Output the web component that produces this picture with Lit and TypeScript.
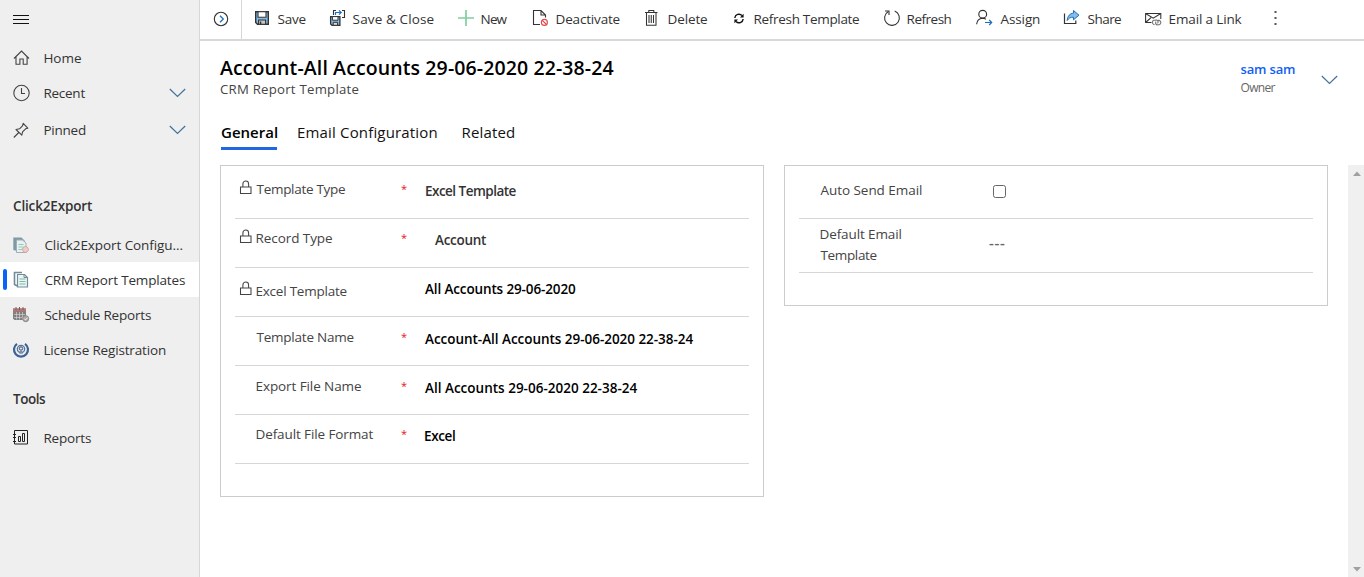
import { LitElement, html, svg, css } from "lit";
import { customElement, property } from "lit/decorators.js";
import { classMap } from "lit/directives/class-map.js";

const FAMILY = '"Open Sans", "Noto Sans", sans-serif';
const pen = document.createElement("canvas").getContext("2d")!;

/** A single line of text tracked so that its ink fills the given measure. */
@customElement("fit-text")
class FitText extends LitElement {
  @property() text = "";
  @property({ type: Number }) w = 0;
  @property({ type: Number }) size = 13.5;
  @property({ type: Number }) weight = 400;
  static styles = css`
    :host { display: block; flex: none; white-space: pre; }
    span { display: block; font-family: "Open Sans", "Noto Sans", sans-serif; }
  `;
  render() {
    pen.font = `${this.weight} ${this.size}px ${FAMILY}`;
    const m = pen.measureText(this.text);
    const ink = m.actualBoundingBoxLeft + m.actualBoundingBoxRight;
    const track = (this.w - ink) / Math.max(1, this.text.length - 1);
    return html`<span style="width:${this.w}px;font-size:${this.size}px;font-weight:${this.weight};letter-spacing:${track.toFixed(3)}px;text-indent:${m.actualBoundingBoxLeft.toFixed(2)}px">${this.text}</span>`;
  }
}

const t = (text: string, w: number, size = 13.5, weight = 400) =>
  html`<fit-text .text=${text} .w=${w} .size=${size} .weight=${weight}></fit-text>`;

const D = "#333";
const B = "#1c6fbe";

const command: Record<string, unknown> = {
  save: svg`<path d="M2.7 2.7h12.6v12.6H4.5l-1.8-1.8z" fill="#83bde8" stroke=${D} stroke-width="1.4"/><path d="M5 2.7h8v5.6H5z" fill="#fff" stroke=${D} stroke-width="1.1"/><path d="M5.6 11h7v4.3h-7z" fill="#c8c8c8" stroke=${D} stroke-width="1.1"/><path d="M7.6 12.5v2.5" stroke=${D} stroke-width="1.4"/>`,
  saveClose: svg`<path d="M2.6 7.6h9.3v8.7H4l-1.4-1.4z" fill="#83bde8" stroke=${D} stroke-width="1.3"/><path d="M4.4 7.6h5.6v3.6H4.4z" fill="#fff" stroke=${D}/><path d="M5.2 13.3h4.4v3H5.2z" fill="#ddd" stroke=${D}/><path d="M5.5 6V1.5H8M14 1.5h2.5V8.5H14" fill="none" stroke=${D} stroke-width="1.1"/><path d="M7.5 6V3.500H13M11 1.300l2.200 2.200L11 5.700" fill="none" stroke=${B} stroke-width="1.2"/>`,
  add: svg`<path d="M1 9h16M9 1v16" stroke="#82cda0" stroke-width="1.7"/>`,
  deactivate: svg`<path d="M8 15.500H1.500v-14H9l4.500 4.500V8.500M9 1.500V6h4.500" fill="none" stroke=${D} stroke-width="1.1"/><circle cx="12.400" cy="13.400" r="3" fill="#fff" stroke="#e0484c" stroke-width="1.1"/><path d="M10.300 11.300l4.200 4.200" stroke="#e0484c" stroke-width="1.1"/>`,
  remove: svg`<path d="M1 3.500h12.500M4.800 3.500v-2h5v2M2.500 3.500v12.700h9.500V3.500M5 6v8M7.250 6v8M9.500 6v8" fill="none" stroke=${D} stroke-width="1.050"/>`,
  sync: svg`<path d="M4.800 9A4.200 4.200 0 0 1 12 6.500M13.200 10A4.200 4.200 0 0 1 6 12.500" fill="none" stroke="#111" stroke-width="1.400"/><path d="M13.600 4.800v3.700H10zM4.400 14.200v-3.700h3.600z" fill="#111"/>`,
  refresh: svg`<path d="M11.700 2.100A7.400 7.400 0 1 1 5.400 2.500" fill="none" stroke=${D} stroke-width="1.100"/><path d="M2 2h4v4" fill="none" stroke=${D} stroke-width="1.100"/>`,
  assign: svg`<circle cx="6.700" cy="5.200" r="3.900" fill="none" stroke=${D} stroke-width="1.150"/><path d="M.6 15.200C1 11.500 3.500 9.300 6.600 9.200q2 0 3.300 1" fill="none" stroke=${D} stroke-width="1.150"/><path d="M9 13.500h6.500M13.200 11l2.500 2.500-2.500 2.500" fill="none" stroke=${B} stroke-width="1.200"/>`,
  share: svg`<path d="M1.500 4.500v10h11.300v-3" fill="none" stroke=${D} stroke-width="1.200"/><path d="M10.500 1.500l5.500 4.700-5.500 4.600V8.300C7.500 8 5.600 9.200 4.200 11.500 4.500 7 7 4.300 10.500 4.200z" fill="#83bde8" stroke=${B} stroke-width="1"/>`,
  mail: svg`<path d="M6.500 13.500H.6V4.500h15.200V10M.6 4.500l7.600 4.600 7.600-4.600M.6 13.500L6 8.600" fill="none" stroke=${D} stroke-width="1.050"/><path d="M9.500 15.600l-1-.4a2.200 2.200 0 0 1 .4-4l2.800-.2a2 2 0 0 1 .8 3.400M12.800 11.200l1.300.2a2.200 2.200 0 0 1 0 4.300l-2.200.2a2 2 0 0 1-.8-3.200" fill="none" stroke="#777" stroke-width="1.150"/>`,
};

const nav: Record<string, unknown> = {
  home: svg`<path d="M1 9.500L8.500 2 16 9.500M3 8v7.300h3.900V10h3.300v5.300h3.900V8" fill="none" stroke="#444" stroke-width="1.100"/>`,
  clock: svg`<circle cx="8.500" cy="9" r="7.700" fill="none" stroke="#444" stroke-width="1.100"/><path d="M8.500 4v5.500H12" fill="none" stroke="#444" stroke-width="1.100"/>`,
  pin: svg`<path d="M.8 16.500l5-5M3 8.500l5.800 5.700.8-3.400 3-3 2.200-.6L10.200 2.300 9.500 4.800l-3 3z" fill="none" stroke="#444" stroke-width="1.100" stroke-linejoin="round"/>`,
  config: svg`<path d="M.3 1.500h8.200L12 5v3l-4 8-7.700-2z" fill="#8199a5"/><path d="M3.500 4h6l3.500 3v9.500H3.500z" fill="#e8f1ef" stroke="#9db0b8"/><path d="M5.500 8.500h5M5.500 11h5M5.500 13.500h4" stroke="#8fcbbd" stroke-width="1.200"/><circle cx="12.500" cy="13.500" r="2.900" fill="#e7cfcc" stroke="#d88f88" stroke-dasharray="1.500 .7"/>`,
  report: svg`<path d="M1.500 14V1.500h7.500M1.500 13.500l3 1.500" stroke="#728c9b" stroke-width="1.600" fill="none"/><path d="M4.500 3.500h7l3 3v9.500h-10z" fill="#edf5f3" stroke="#728c9b" stroke-width="1.200"/><path d="M11 3.500v3h3.500" fill="none" stroke="#728c9b"/><path d="M6.500 8h6M6.500 10.500h6M6.500 13h6" stroke="#78bba9" stroke-width="1.200"/>`,
  schedule: svg`<path d="M0 2.500h13V14H1.500L0 12.500z" fill="#808080"/><path d="M0 2.500h13v2.800H0z" fill="#c07070"/><path d="M3 1v3M6.500 1v3M10 1v3" stroke="#666"/><path d="M1 8.500h11M1 11.500h11M3.500 6v7.500M6.500 6v7.500M9.500 6v7.500" stroke="#d0d0d0" stroke-width=".7"/><circle cx="12.700" cy="12.700" r="3" fill="#b8a9a4" stroke="#898989"/><path d="M11.300 12.700l1.200 1.200 2-2.300" fill="none" stroke="#eee"/>`,
  license: svg`<path d="M4 2.800A7 7 0 1 0 12 2.800" fill="none" stroke="#3d6294" stroke-width="2.200"/><circle cx="8" cy="8" r="3.700" fill="#dfe4ec" stroke="#51739d" stroke-width="1.200"/><circle cx="8" cy="7.500" r="1.700" fill="none" stroke="#3c4c75"/><path d="M6.500 10v3.500L8 12.300l1.500 1.200V10" fill="#7b8db0"/>`,
  reports: svg`<path d="M1.500 1.500h13v13.500h-13zM0 5.500h3M0 8.500h3M0 12.500h3M5.500 7.500h2v5h-2zM9.500 4.500h2v8h-2z" fill="none" stroke="#222" stroke-width="1"/>`,
};

const commands: [string, string, number][] = [
  ["save", "Save", 28], ["saveClose", "Save & Close", 81], ["add", "New", 26],
  ["deactivate", "Deactivate", 63], ["remove", "Delete", 38.5], ["sync", "Refresh Template", 104.5],
  ["refresh", "Refresh", 44], ["assign", "Assign", 39.5], ["share", "Share", 33.5], ["mail", "Email a Link", 72],
];

const chevron = html`<svg class="chev" width="17" height="10"><path d="M.8 1l7.700 7.500L16.200 1" fill="none" stroke="#41729a" stroke-width="1.200"/></svg>`;
const lock = html`<svg class="lock" width="12" height="16"><path d="M.5 7h10.500v6.500H.5zM2.900 7V3.900a2.850 2.850 0 0 1 5.700 0V7" fill="none" stroke="#444" stroke-width="1.050"/></svg>`;

type Row = { cls: string; locked?: boolean; req?: boolean; label: string; lw: number; value: string; vw: number; soft?: boolean };
const rows: Row[] = [
  { cls: "r1", locked: true, req: true, label: "Template Type", lw: 88.5, value: "Excel Template", vw: 90.5, soft: true },
  { cls: "r2", locked: true, req: true, label: "Record Type", lw: 75.5, value: "Account", vw: 51, soft: true },
  { cls: "r3", locked: true, label: "Excel Template", lw: 90, value: "All Accounts 29-06-2020", vw: 151 },
  { cls: "r4", req: true, label: "Template Name", lw: 97, value: "Account-All Accounts 29-06-2020 22-38-24", vw: 268.5 },
  { cls: "r4", req: true, label: "Export File Name", lw: 104.5, value: "All Accounts 29-06-2020 22-38-24", vw: 212.5 },
  { cls: "r2", req: true, label: "Default File Format", lw: 117, value: "Excel", vw: 30 },
];

@customElement("app-root")
class AppRoot extends LitElement {
  static styles = css`
    :host { display: flex; width: 100vw; height: 100vh; background: #fff; overflow: hidden; font-family: "Open Sans", "Noto Sans", sans-serif; color: #333; line-height: 20px; }
    * { box-sizing: border-box; }
    svg { display: block; flex: none; overflow: visible; }
    aside { width: 200px; flex: none; background: #efefef; border-right: 1px solid #d6d6d6; }
    .burger { margin: 14px 0 0 13px; height: 26px; }
    .item { display: flex; align-items: center; height: 35px; padding-left: 13px; }
    .item svg.ic { margin-right: 14px; }
    .item fit-text { margin-left: .4px; }
    .item.recent { height: 36px; }
    .item.pinned { height: 37px; }
    .item .chev { margin-left: auto; margin-right: 13.5px; }
    .item.on { background: #fff; padding-left: 3px; }
    .item.on::before { content: ""; width: 4px; height: 21px; border-radius: 2px; background: #0b62f7; margin-right: 6px; }
    .group { padding-left: 13px; height: 20px; }
    .g1 { margin: 48px 0 11px; }
    .g2 { margin: 22px 0 11px; }
    main { flex: 1; min-width: 0; display: flex; flex-direction: column; }
    .bar { display: flex; height: 41px; border-bottom: 2px solid #d8d8d8; flex: none; }
    .go { width: 42px; height: 39px; border-right: 1px solid #d6d6d6; padding: 11px 0 0 13px; margin-right: 11px; }
    .cmds { display: grid; grid-template-columns: 75px 129px 75px 112px 86px 153px 93px 87px 82px 128px 4px; padding-top: 9px; }
    .cmd { display: flex; height: 20px; }
    .cmd fit-text { margin-left: .6px; }
    .head { display: flex; justify-content: space-between; padding: 17px 26px 0 20px; height: 81px; flex: none; }
    .title { color: #000; }
    .sub { color: #444; padding-top: 1px; }
    .owner { display: flex; gap: 26px; padding-top: 1px; }
    .name { color: #1160f5; height: 19px; }
    .own { color: #666; line-height: 18px; padding-top: 1px; }
    .owner .chev { margin-top: 16px; }
    .tabs { display: flex; gap: 21px; padding-left: 21px; height: 43px; color: #111; flex: none; }
    .tab { height: 28px; }
    .tab.two { margin-right: 5px; }
    .tab.on { border-bottom: 3px solid #2266e3; color: #000; }
    .body { flex: 1; display: flex; min-height: 0; align-items: flex-start; padding-left: 20px; }
    .panel { width: 544px; border: 1px solid #ccc; padding: 0 14px; margin-right: 20px; flex: none; }
    .p1 { height: 332px; }
    .p2 { height: 141px; }
    .row { display: grid; grid-template-columns: 5px 16.5px 144.5px 24px 1fr; height: 49px; border-bottom: 1px solid #d6d6d6; color: #444; }
    .row > * { grid-row: 1; }
    .row .lock { grid-column: 2; margin-top: 1px; }
    .row .label { grid-column: 3; }
    .row .star { grid-column: 4; color: #e81123; }
    .row .value { grid-column: 5; color: #000; padding-top: 2px; }
    .row .value.soft { color: #333; padding-left: 1px; }
    .r1 { height: 53px; padding-top: 13px; }
    .r2 { padding-top: 9px; }
    .row.r2 .value.soft { padding-left: 10px; }
    .r3 { padding-top: 13px; }
    .row.r3 .lock { margin-top: 0; }
    .row.r3 .value { padding-top: 0; margin-top: -2px; }
    .r4 { padding-top: 10px; }
    .erow { display: grid; grid-template-columns: 21.5px 168.5px 1fr; border-bottom: 1px solid #d6d6d6; color: #444; }
    .erow > * { grid-row: 1; }
    .e1 { height: 53px; padding-top: 14px; }
    .e2 { height: 54px; padding-top: 5px; line-height: 21px; }
    .el { grid-column: 2; }
    .ev { grid-column: 3; }
    .box { width: 13px; height: 13px; border: 1px solid #666; border-radius: 2.5px; margin: 5px 0 0 4px; }
    .dash { padding-top: 8px; color: #666; }
    .scroll { align-self: stretch; width: 16px; background: #f0f0f0; display: flex; flex-direction: column; justify-content: space-between; padding: 6px 0 5px 4.5px; }
  `;

  item(icon: string, label: string, w: number, cls: Record<string, boolean> = {}, chev = false) {
    return html`<div class=${classMap({ item: true, ...cls })}><svg class="ic" width="17" height="18">${nav[icon]}</svg>${t(label, w)}${chev ? chevron : ""}</div>`;
  }

  render() {
    return html`
      <aside>
        <svg class="burger" width="16" height="26"><path d="M0 1.500h16M0 5.500h16M0 9.500h16" stroke="#111" stroke-width="1"/></svg>
        ${this.item("home", "Home", 36.5)}
        ${this.item("clock", "Recent", 41, { recent: true }, true)}
        ${this.item("pin", "Pinned", 41.5, { pinned: true }, true)}
        <div class="group g1">${t("Click2Export", 79, 13.5, 600)}</div>
        ${this.item("config", "Click2Export Configu...", 138)}
        ${this.item("report", "CRM Report Templates", 140.5, { on: true })}
        ${this.item("schedule", "Schedule Reports", 106.5)}
        ${this.item("license", "License Registration", 121.5)}
        <div class="group g2">${t("Tools", 33, 13.5, 600)}</div>
        ${this.item("reports", "Reports", 46.5)}
      </aside>
      <main>
        <div class="bar">
          <div class="go"><svg width="16" height="16"><circle cx="8" cy="8" r="6.700" fill="none" stroke="#333" stroke-width="1.100"/><path d="M7 4.700L10.300 8 7 11.300" fill="none" stroke=${B} stroke-width="1.300"/></svg></div>
          <div class="cmds">
            ${commands.map(([i, l, w]) => html`<div class="cmd"><svg width="24" height="20">${command[i]}</svg>${t(l, w)}</div>`)}
            <svg width="4" height="20"><path d="M1.500 2h2v2h-2zM1.500 8h2v2h-2zM1.500 14h2v2h-2z" fill="#555"/></svg>
          </div>
        </div>
        <div class="head">
          <div>
            <div class="title">${t("Account-All Accounts 29-06-2020 22-38-24", 393.5, 19.5, 600)}</div>
            <div class="sub">${t("CRM Report Template", 138.5, 13.2, 500)}</div>
          </div>
          <div class="owner">
            <div><div class="name">${t("sam sam", 54.5, 13, 600)}</div><div class="own">${t("Owner", 35, 12)}</div></div>
            ${chevron}
          </div>
        </div>
        <div class="tabs">
          <div class="tab on">${t("General", 56, 15, 600)}</div>
          <div class="tab two">${t("Email Configuration", 138.5, 15)}</div>
          <div class="tab">${t("Related", 51.5, 15)}</div>
        </div>
        <div class="body">
          <section class="panel p1">
            ${rows.map((r) => html`<div class="row ${r.cls}">
              ${r.locked ? lock : ""}
              <div class="label">${t(r.label, r.lw)}</div>
              ${r.req ? html`<div class="star">${t("*", 5, 11)}</div>` : ""}
              <div class=${classMap({ value: true, soft: !!r.soft })}>${t(r.value, r.vw, 13.5, 600)}</div>
            </div>`)}
          </section>
          <section class="panel p2">
            <div class="erow e1"><div class="el">${t("Auto Send Email", 101.5)}</div><div class="ev"><div class="box"></div></div></div>
            <div class="erow e2"><div class="el">${t("Default Email", 81)}${t("Template", 56)}</div><div class="ev dash">${t("---", 16, 15, 600)}</div></div>
          </section>
          <div class="scroll">
            <svg width="8" height="5"><path d="M0 5h8L4 .5z" fill="#a0a0a0"/></svg>
            <svg width="8" height="5"><path d="M0 0h8L4 4.500z" fill="#a0a0a0"/></svg>
          </div>
        </div>
      </main>`;
  }
}
